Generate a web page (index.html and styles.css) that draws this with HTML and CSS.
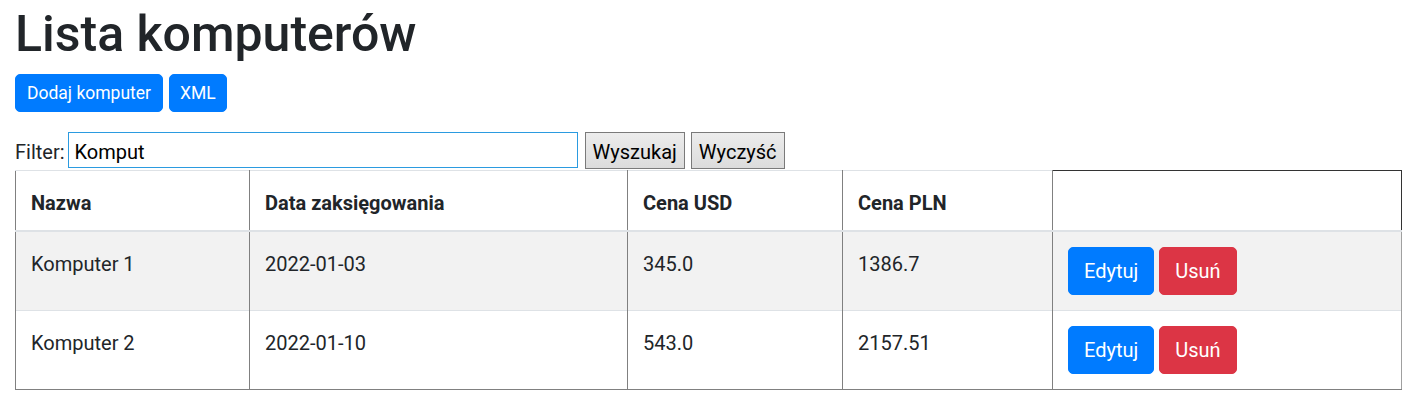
FILE: index.html
```html
<!DOCTYPE html>
<html lang="pl">
<head>
<meta charset="utf-8">
<title>Lista komputerów</title>
<link rel="stylesheet" href="styles.css">
</head>
<body>
<main class="page">
  <h1 class="title">Lista komputerów</h1>
  <div class="actions">
    <button class="btn btn-primary btn-sm" type="button">Dodaj komputer</button>
    <button class="btn btn-primary btn-sm" type="button">XML</button>
  </div>
  <form class="filter">
    <label class="filter-label" for="filter">Filter:</label>
    <input class="filter-input" id="filter" type="text" value="Komput">
    <button class="plain-btn" type="button">Wyszukaj</button>
    <button class="plain-btn" type="button">Wyczyść</button>
  </form>
  <table class="table">
    <colgroup>
      <col class="c1"><col class="c2"><col class="c3"><col class="c4"><col class="c5">
    </colgroup>
    <thead>
      <tr>
        <th>Nazwa</th>
        <th>Data zaksięgowania</th>
        <th>Cena USD</th>
        <th>Cena PLN</th>
        <th class="th-empty"></th>
      </tr>
    </thead>
    <tbody>
      <tr class="striped">
        <td>Komputer 1</td>
        <td>2022-01-03</td>
        <td>345.0</td>
        <td>1386.7</td>
        <td class="actions-cell"><div class="row-actions"><button class="btn btn-primary" type="button">Edytuj</button><button class="btn btn-danger" type="button">Usuń</button></div></td>
      </tr>
      <tr>
        <td>Komputer 2</td>
        <td>2022-01-10</td>
        <td>543.0</td>
        <td>2157.51</td>
        <td class="actions-cell"><div class="row-actions"><button class="btn btn-primary" type="button">Edytuj</button><button class="btn btn-danger" type="button">Usuń</button></div></td>
      </tr>
    </tbody>
  </table>
</main>
</body>
</html>
```
FILE: styles.css
```css
html, body {
  margin: 0;
  padding: 0;
  background: #fff;
}
body {
  font-family: Roboto, "Liberation Sans", sans-serif;
  font-size: 20px;
  line-height: 30px;
  color: #212529;
}
.page {
  padding: 4px 12px 0 15px;
}
.title {
  margin: 0 0 10px;
  font-size: 50px;
  line-height: 60px;
  font-weight: 500;
  color: #212529;
}
.actions {
  display: flex;
  gap: 6px;
}
.btn {
  font-family: inherit;
  border: 1px solid transparent;
  color: #fff;
  cursor: pointer;
  margin: 0;
}
.btn-sm {
  font-size: 17.5px;
  line-height: 26px;
  padding: 5px 11px;
  border-radius: 5px;
}
.btn-sm + .btn-sm {
  padding: 5px 10px;
}
.btn-primary {
  background: #007bff;
  border-color: #007bff;
}
.btn-danger {
  background: #dc3545;
  border-color: #dc3545;
}
.filter {
  display: flex;
  align-items: flex-start;
  margin: 20px 0 0;
}
.filter-label {
  line-height: 36px;
  padding-top: 2px;
  margin-right: 3px;
}
.filter-input {
  width: 510px;
  height: 36px;
  box-sizing: border-box;
  border: 1px solid #2b9be0;
  padding: 3px 6px 0;
  font-family: inherit;
  font-size: 20px;
  color: #000;
  outline: none;
  margin: 0 7px 0 0;
}
.plain-btn {
  height: 37px;
  box-sizing: border-box;
  padding: 2px 7px 0;
  margin: 0 6px 0 0;
  font-family: inherit;
  font-size: 20px;
  color: #000;
  background: linear-gradient(#ececec, #dcdcdc);
  border: 1px solid #7a7a7a;
  border-radius: 0;
}
.table {
  width: 100%;
  border-collapse: collapse;
  table-layout: fixed;
  color: #212529;
}
.c1 { width: 234px; }
.c2 { width: 378px; }
.c3 { width: 215px; }
.c4 { width: 210px; }
.table th,
.table td {
  text-align: left;
  vertical-align: top;
  padding: 17px 15px 13px;
  border-left: 1px solid #808080;
  border-right: 1px solid #808080;
  border-top: 1px solid #dee2e6;
}
.table td.actions-cell {
  padding: 15px;
}
.table th {
  font-weight: 700;
  padding: 17px 15px 12px;
  border-bottom: 2px solid #dee2e6;
}
.table th.th-empty {
  border-top: 1px solid #333;
  border-right: 1px solid #333;
}
.table tbody tr:last-child td {
  border-bottom: 1px solid #808080;
}
.table td:last-child {
  border-right-color: #a0a0a0;
}
.striped td {
  background: #f2f2f2;
}
.row-actions {
  display: flex;
  gap: 5px;
}
.row-actions .btn {
  font-size: 20px;
  line-height: 30px;
  padding: 8px 15px;
  border-radius: 5px;
}
```
